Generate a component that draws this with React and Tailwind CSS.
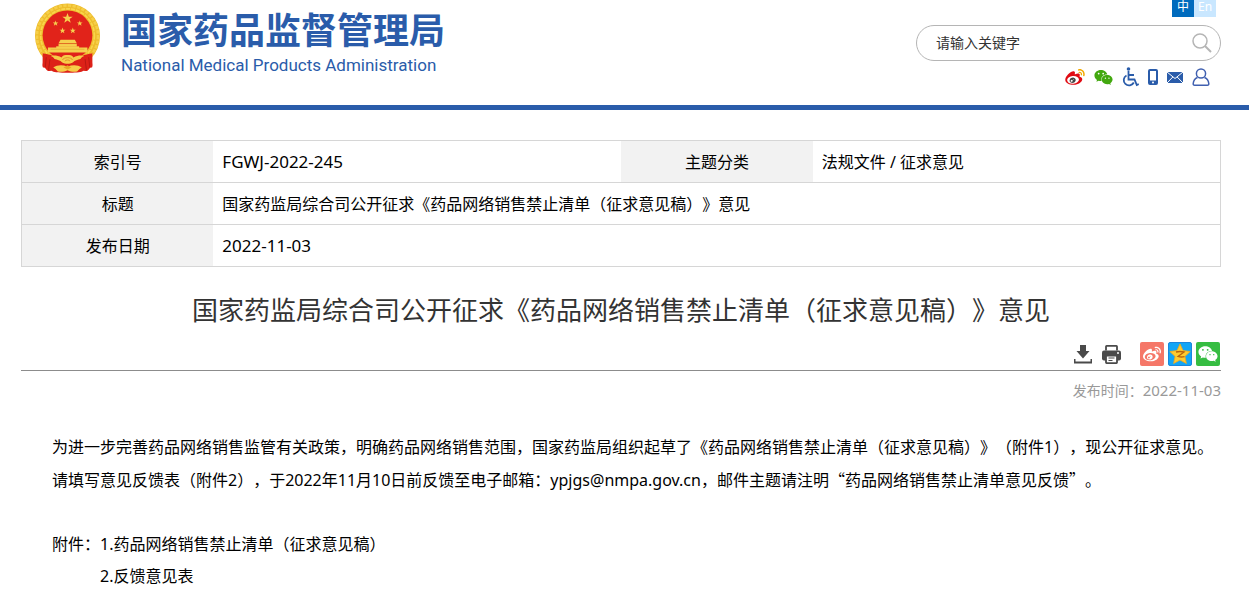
import { FaWeixin } from 'react-icons/fa';

const WEIBO_BODY =
    'M214.8 446.7C108.5 446.7 0 395.3 0 310.4c0-44.3 28-95.4 76.3-143.7C176 67 279.5 65.8 249.9 161c-4 13.1 12.3 5.7 12.3 6 79.5-33.6 140.5-16.8 114 51.4-3.7 9.4 1.1 10.9 8.3 13.1 135.7 42.3 34.8 215.2-169.7 215.2zm143.7-146.3c-5.4-55.7-78.5-94-163.4-85.7-84.8 8.6-148.8 60.3-143.4 116s78.5 94 163.4 85.7c84.8-8.6 148.8-60.3 143.4-116z';
const WEIBO_WAVES =
    'M407 177.6c7.6-24-13.4-46.8-37.4-41.7-22 4.8-28.8-28.1-7.1-32.8 50.1-10.9 92.3 37.1 76.5 84.8-6.8 21.2-38.8 10.8-32-10.3zM347.9 35.1c-25.9 5.6-16.8 43.7 8.3 38.3 72.3-15.2 134.8 52.8 111.7 124-7.4 24.2 29.1 37 37.4 12 31.9-99.8-55.1-195.9-157.4-174.3z';
const WEIBO_EYE =
    'M269.4 346.1c-17.1 38.8-66.8 60-109.1 46.3-40.8-13.1-58-53.4-40.3-89.7 17.7-35.4 63.1-55.4 103.4-45.1 42 10.8 63.1 50.2 46 88.5zm-86.3-30c-12.9-5.4-30 .3-38 12.9-8.3 12.9-4.3 28 8.6 34 13.1 6 30.8.3 39.1-12.9 8-13.1 3.7-28.3-9.7-34zm32.6-13.4c-5.1-1.7-11.4.6-14.3 5.4-2.9 5.1-1.4 10.6 3.7 12.9 5.1 2 11.7-.3 14.6-5.4 2.8-5.2 1.1-10.9-4-12.9z';

function Weibo({ body, waves, eye, className }) {
    return (
        <svg viewBox="0 30 512 420" className={className} aria-hidden="true">
            <path fill={body} d={WEIBO_BODY} />
            <path fill={waves} d={WEIBO_WAVES} />
            <path fill={eye} d={WEIBO_EYE} />
        </svg>
    );
}

const STAR = 'M0-10 2.4-3.2 9.5-3.1 3.8 1.2 5.9 8.1 0 4 -5.9 8.1-3.8 1.2-9.5-3.1-2.4-3.2z';

// National emblem: wheat ring, stars, gate, red drapery and cogwheel
function Emblem() {
    return (
        <svg viewBox="40 6 202 216" className="h-[72px] w-[67px] shrink-0" aria-hidden="true">
            <circle cx="141" cy="108" r="98" fill="#eebc2c" />
            <circle cx="141" cy="108" r="92" fill="none" stroke="#f6cf48" strokeWidth="8" strokeDasharray="10 4" />
            <circle cx="141" cy="107" r="81" fill="none" stroke="#f9d64c" strokeWidth="5" strokeDasharray="12 3" />
            <circle cx="141" cy="106" r="75" fill="#e1231a" />
            <g fill="#f6d04e">
                <path d={STAR} transform="translate(141 55) scale(1.65)" />
                <path d={STAR} transform="translate(105 70) scale(.9)" />
                <path d={STAR} transform="translate(178 70) scale(.9)" />
                <path d={STAR} transform="translate(126 92) scale(.95)" />
                <path d={STAR} transform="translate(157 92) scale(.95)" />
                <path d="M120 119h43l6 11h-55z" />
                <path d="M114 132h55v8h-55z" />
                <path d="M107 139h69v16h-69z" />
                <path d="M82 143h119v15H82z" />
            </g>
            <path d="M114 131h55M90 148h102" stroke="#dc9a24" strokeWidth="1.5" />
            <path
                fill="#dd2118"
                d="M66 160c20 3 40 9 52 18h46c12-9 32-15 52-18v27c0 5 2 10-1 16-7-2-9 6-13 9-6 5-11-3-17 3-6 5-82 5-88 0-6-6-11 2-17-3-4-3-6-11-13-9-3-6-1-11-1-16z"
            />
            <path d="M77 172l-3 30M88 178l-4 32M205 172l3 30M194 178l4 32" stroke="#b81811" strokeWidth="3" />
            <path
                fill="#f6cd49"
                d="M90 168c11-2 23-1 33 5 4-8 11-8 18-8s14 0 18 8c10-6 22-7 33-5-7 2-9 5-12 9-8 3-17 3-23 11-9 5-23 5-32 0-6-8-15-8-23-11-3-4-5-7-12-9z"
            />
            <path d="M126 180c3-9 27-9 30 0M133 184c3-5 13-5 16 0" fill="none" stroke="#d8761f" strokeWidth="2" />
            <path
                fill="#f6cd49"
                d="M98 203c12-8 26-9 43-3 17-6 31-5 43 3-5 3-9 6-14 12-10 2-19 1-29-4-10 5-19 6-29 4-5-6-9-9-14-12z"
            />
            <path d="M129 203l12-7 12 7-12 6z" fill="#e9a626" />
        </svg>
    );
}

function WheelchairIcon() {
    return (
        <svg viewBox="0 0 17 20" className="h-5 w-[17px]" fill="none" stroke="#2a5caa" strokeWidth="1.8" aria-hidden="true">
            <circle cx="6.5" cy="2" r="1.8" fill="#2a5caa" stroke="none" />
            <path d="M6.500 4v8.500h6l2.300 5.500 2-.8M6.500 8h5.500" />
            <path d="M4.500 8.500a5.300 5.300 0 1 0 7.300 7" />
        </svg>
    );
}

function PhoneIcon() {
    return (
        <svg viewBox="0 0 10 16" className="h-4 w-2.5" fill="none" aria-hidden="true">
            <rect x="1" y="1" width="8" height="14" rx="1" stroke="#2a5caa" strokeWidth="2" />
            <path d="M1 13h8" stroke="#2a5caa" strokeWidth="3" />
            <circle cx="5" cy="13.500" r="1" fill="#fff" />
        </svg>
    );
}

function MailIcon() {
    return (
        <svg viewBox="0 0 16 11" className="h-[11px] w-4" aria-hidden="true">
            <path fill="#2a5caa" d="M0 0h16v11H0z" />
            <path d="M0 0l8 6.500L16 0M0 11l5.800-6M16 11l-5.800-6" fill="none" stroke="#fff" />
        </svg>
    );
}

function UserIcon() {
    return (
        <svg viewBox="0 0 18 18" className="size-[18px]" fill="none" stroke="#4060b0" strokeWidth="1.500" aria-hidden="true">
            <circle cx="9" cy="5.500" r="4.600" />
            <path d="M5.500 9.500C2.800 10.600 1.500 12.500 1.200 15.500c-.1 1 .4 1.700 1.400 1.700h12.800c1 0 1.500-.7 1.400-1.700-.3-3-1.600-4.900-4.300-6" />
        </svg>
    );
}

function DownloadIcon() {
    return (
        <svg viewBox="0 0 18 19" className="h-[19px] w-[18px]" fill="#4a4a4a" aria-hidden="true">
            <path d="M6 0h6v6h3.500L9 13.500 2.500 6H6z" />
            <path d="M0 14h1.500v2.500h15V14H18v4.500H0z" />
        </svg>
    );
}

function PrintIcon() {
    return (
        <svg viewBox="0 0 19 19" className="size-[19px]" aria-hidden="true">
            <path d="M4 5.500V1.500q0-.6.600-.6h9.800q.6 0 .6.600v4" fill="none" stroke="#4a4a4a" strokeWidth="1.800" />
            <rect y="5.500" width="19" height="10" rx="2" fill="#4a4a4a" />
            <circle cx="16" cy="8" r="1" fill="#fff" />
            <rect x="4" y="10.500" width="11" height="7.600" rx=".5" fill="#fff" stroke="#4a4a4a" strokeWidth="1.800" />
            <path d="M6.500 13h6M6.500 15.500h4" stroke="#4a4a4a" strokeWidth="1.200" />
        </svg>
    );
}

function QzoneIcon() {
    return (
        <svg viewBox="0 0 24 24" className="size-6" aria-hidden="true">
            <rect x=".5" y=".5" width="23" height="23" rx="1.5" fill="#12a5f5" stroke="#1b86dc" />
            <path
                d="M12 2l3 6.600 7.200.9-5.300 4.900 1.500 7.100L12 18l-6.400 3.500 1.500-7.100L1.800 9.500 9 8.600z"
                fill="#ffcb2e"
                stroke="#f3a81c"
                strokeWidth=".8"
                strokeLinejoin="round"
            />
            <path d="M8 10c2.700-.7 5.300-.7 8 0l-6 4.500c2 .6 4 .7 6.500.2" fill="none" stroke="#b8620c" strokeWidth="1.300" />
        </svg>
    );
}

function Header() {
    return (
        <header className="flex items-start justify-between border-b-5 border-[#2a5caa] pr-7 pb-[18px] pl-[34px]">
            <a href="#" className="flex items-start gap-5 pt-0.5 text-[#2a5caa]">
                <Emblem />
                <span className="flex flex-col pt-2">
                    <span className="text-[36px] leading-[42px] font-bold">国家药品监督管理局</span>
                    <span className="font-['Roboto'] text-[17px] leading-[26px]">National Medical Products Administration</span>
                </span>
            </a>

            <div className="flex flex-col items-end">
                <div className="mr-[5px] flex text-xs leading-[14px] text-white">
                    <a href="#" className="h-[17px] w-[22px] bg-[#006bbd] text-center">中</a>
                    <a href="#" className="h-[17px] w-[22px] bg-[#c9e7ff] text-center">En</a>
                </div>
                <form className="mt-2 flex h-9 w-[305px] items-center rounded-full border border-[#b5b5b5] pr-2 pl-[19px]">
                    <input
                        type="text"
                        aria-label="请输入关键字"
                        placeholder="请输入关键字"
                        className="min-w-0 flex-1 text-sm outline-none placeholder:text-[#333]"
                    />
                    <button type="button" aria-label="搜索">
                        <svg viewBox="0 0 20 20" className="size-5" fill="none" stroke="#b5b5b5" strokeWidth="1.500">
                            <circle cx="8" cy="8" r="7" />
                            <path d="M13 13l6 6" strokeWidth="2" />
                        </svg>
                    </button>
                </form>
                <nav className="mt-1.5 mr-[11px] flex h-5 items-center gap-[9px]">
                    <a href="#" aria-label="微博"><Weibo body="#e00b13" waves="#f2a900" eye="#444" className="h-4 w-5" /></a>
                    <a href="#" aria-label="微信"><FaWeixin className="size-[19px] text-[#42a80f]" /></a>
                    <a href="#" aria-label="无障碍"><WheelchairIcon /></a>
                    <a href="#" aria-label="手机版"><PhoneIcon /></a>
                    <a href="#" aria-label="邮箱"><MailIcon /></a>
                    <a href="#" aria-label="个人中心"><UserIcon /></a>
                </nav>
            </div>
        </header>
    );
}

function MetaTable() {
    const label = 'w-[16%] bg-[#f2f2f2] text-center font-normal';
    const value = 'pl-[9px]';
    return (
        <table className="w-full table-fixed border-collapse border border-[#d6d6d6]">
            <tbody>
                <tr className="h-[42px] border-b border-[#d6d6d6]">
                    <th scope="row" className={label}>索引号</th>
                    <td className="pl-[9px] text-[17px]">FGWJ-2022-245</td>
                    <th scope="row" className={label}>主题分类</th>
                    <td className={value}>法规文件 / 征求意见</td>
                </tr>
                <tr className="h-[42px] border-b border-[#d6d6d6]">
                    <th scope="row" className={label}>标题</th>
                    <td colSpan={3} className={value}>国家药监局综合司公开征求《药品网络销售禁止清单（征求意见稿）》意见</td>
                </tr>
                <tr className="h-[42px]">
                    <th scope="row" className={label}>发布日期</th>
                    <td colSpan={3} className="pl-[9px] text-[17px]">2022-11-03</td>
                </tr>
            </tbody>
        </table>
    );
}

export default function App() {
    return (
        <div
            lang="zh-CN"
            className="bg-white font-['Noto_Sans','Noto_Sans_CJK_SC',sans-serif] text-base text-black [text-spacing-trim:space-all]"
        >
            <Header />
            <main className="pt-[30px] pr-7 pl-[21px]">
                <MetaTable />

                <h1 className="mt-[23px] text-center text-[26px] leading-10 text-[#333]">
                    国家药监局综合司公开征求《药品网络销售禁止清单（征求意见稿）》意见
                </h1>

                {/* Save, print and share */}
                <div className="mt-3 flex items-center justify-end border-b border-[#8c8c8c] pr-px pb-1">
                    <button type="button" aria-label="下载" className="mr-2.5"><DownloadIcon /></button>
                    <button type="button" aria-label="打印" className="mr-[19px]"><PrintIcon /></button>
                    <div className="flex gap-1">
                        <a href="#" aria-label="分享到微博" className="flex size-6 items-center justify-center rounded-xs bg-[#f57768]">
                            <Weibo body="#fff" waves="#fff" eye="#fff" className="h-4 w-[18px]" />
                        </a>
                        <a href="#" aria-label="分享到QQ空间"><QzoneIcon /></a>
                        <a href="#" aria-label="分享到微信" className="flex size-6 items-center justify-center rounded-xs bg-[#36bd42]">
                            <FaWeixin className="size-5 text-white" />
                        </a>
                    </div>
                </div>
                <p className="mt-[9px] text-right text-sm leading-5 text-[#999]">
                    发布时间：<time className="text-[15px]">2022-11-03</time>
                </p>

                <article className="mt-[30px] pl-[31px] leading-8">
                    <p>
                        为进一步完善药品网络销售监管有关政策，明确药品网络销售范围，国家药监局组织起草了《药品网络销售禁止清单（征求意见稿）》（附件1），现公开征求意见。
                    </p>
                    <p>
                        请填写意见反馈表（附件2），于2022年11月10日前反馈至电子邮箱：ypjgs@nmpa.gov.cn，邮件主题请注明<q className="font-['Noto_Sans_CJK_SC',sans-serif] before:content-['“'] after:content-['”']">药品网络销售禁止清单意见反馈</q>。
                    </p>
                    <div className="mt-8 flex">
                        <span>附件：</span>
                        <ul>
                            <li><a href="#">1.药品网络销售禁止清单（征求意见稿）</a></li>
                            <li><a href="#">2.反馈意见表</a></li>
                        </ul>
                    </div>
                </article>
            </main>
        </div>
    );
}
